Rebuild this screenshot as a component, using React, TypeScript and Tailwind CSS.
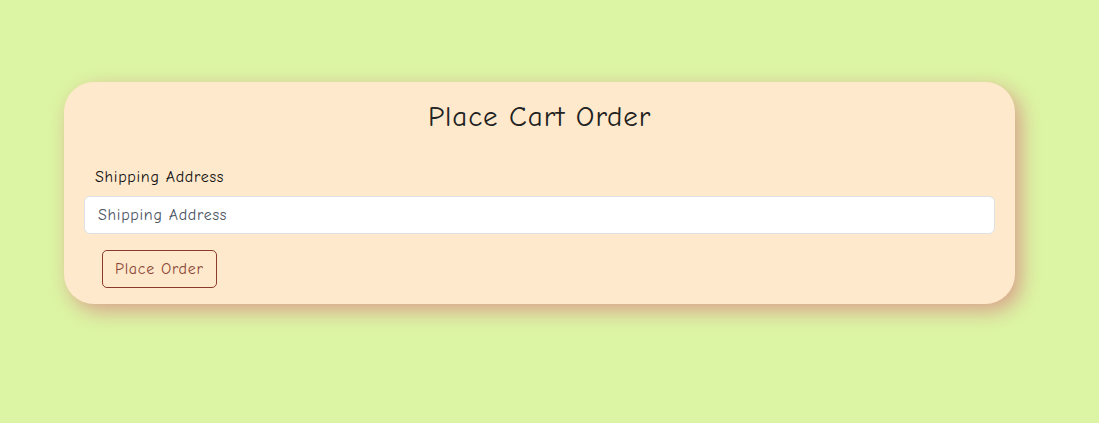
export default function App() {
  return (
    <div className="min-h-[423px] w-full bg-[#dcf5a4] pt-[82px] pl-[64px] pr-[84px]" style={{ fontFamily: '"Comic Sans MS", "Comic Neue", "Open Sans", sans-serif' }}>
      <div className="rounded-[30px] bg-[#ffe9cc] shadow-[6px_7px_20px_rgba(215,125,130,0.7)] px-[20px] pt-[17px] pb-[16px]">
        <h1 className="text-center text-[29px] leading-[36px] tracking-[0.9px] text-[#222]">Place Cart Order</h1>
        <label className="block mt-[32px] ml-[11px] text-[16px] leading-[20px] tracking-[0.7px] text-[#111]">Shipping Address</label>
        <input
          className="mt-[9px] block w-full h-[38px] rounded-[6px] border border-[#dde1e6] bg-white px-[13px] text-[16px] tracking-[0.7px] placeholder:text-[#4b5563] outline-none"
          placeholder="Shipping Address"
        />
        <button className="mt-[16px] ml-[18px] h-[38px] px-[12px] rounded-[5px] border border-[#8b3b2b] text-[16px] tracking-[0.7px] text-[#8a4636]">Place Order</button>
      </div>
    </div>
  );
}
